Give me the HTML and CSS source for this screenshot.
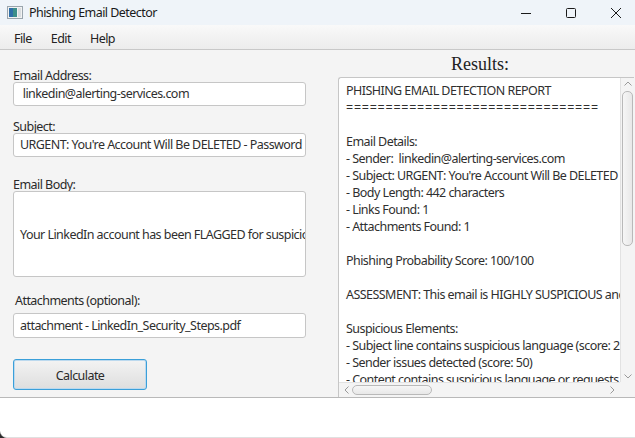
FILE: index.html
```html
<!DOCTYPE html>
<html>
<head>
<meta charset="utf-8">
<link rel="stylesheet" href="styles.css">
</head>
<body>
<div class="window">
  <div class="titlebar">
    <div class="app-icon"><svg width="16" height="13" viewBox="0 0 16 13"><rect x="0.5" y="0.5" width="15" height="12" fill="#f2f2f2" stroke="#9aa5ad"/><rect x="2" y="2" width="8" height="9" fill="#3c8f8a"/><rect x="2" y="2" width="4" height="9" fill="#2f6fa8"/><rect x="11" y="2" width="3" height="9" fill="#d9dde0"/></svg></div>
    <div class="title">Phishing Email Detector</div>
    <div class="controls">
      <span class="ctl"><svg width="12" height="12" viewBox="0 0 12 12"><line x1="1" y1="6.5" x2="11" y2="6.5" stroke="#1a1a1a" stroke-width="1"/></svg></span>
      <span class="ctl"><svg width="12" height="12" viewBox="0 0 12 12"><rect x="1.5" y="1.5" width="9" height="9" rx="1" fill="none" stroke="#1a1a1a" stroke-width="1"/></svg></span>
      <span class="ctl"><svg width="12" height="12" viewBox="0 0 12 12"><path d="M1 1 L11 11 M11 1 L1 11" stroke="#1a1a1a" stroke-width="1"/></svg></span>
    </div>
  </div>
  <div class="menubar">
    <span class="menu">File</span>
    <span class="menu">Edit</span>
    <span class="menu">Help</span>
  </div>
  <div class="content">
    <div class="form">
      <div class="label l-first">Email Address:</div>
      <div class="field"> linkedin@alerting-services.com</div>
      <div class="label l-gap">Subject:</div>
      <div class="field">URGENT: You're Account Will Be DELETED - Password Reset Required</div>
      <div class="label l-gap2">Email Body:</div>
      <div class="area">Your LinkedIn account has been FLAGGED for suspicious activity</div>
      <div class="label l-attach">Attachments (optional):</div>
      <div class="field f-pad">attachment - LinkedIn_Security_Steps.pdf</div>
      <div class="button">Calculate</div>
    </div>
    <div class="results-col">
      <div class="results-title">Results:</div>
      <div class="results">
        <div class="results-text">PHISHING EMAIL DETECTION REPORT
<span class="rule">================================</span>

Email Details:
- Sender:  linkedin@alerting-services.com
- Subject: URGENT: You're Account Will Be DELETED - Password Reset Required
- Body Length: 442 characters
- Links Found: 1
- Attachments Found: 1

Phishing Probability Score: 100/100

ASSESSMENT: This email is HIGHLY SUSPICIOUS and likely a phishing attempt.

Suspicious Elements:
- Subject line contains suspicious language (score: 25)
- Sender issues detected (score: 50)
- Content contains suspicious language or requests</div>
        <div class="vbar">
          <svg class="arrow" width="10" height="8" viewBox="0 0 10 8"><path d="M1.5 5.5 L5 2 L8.5 5.5" fill="none" stroke="#9a9a9a" stroke-width="1"/></svg>
          <div class="vtrack"><div class="vthumb"></div></div>
          <svg class="arrow" width="10" height="8" viewBox="0 0 10 8"><path d="M1.5 2.5 L5 6 L8.5 2.5" fill="none" stroke="#9a9a9a" stroke-width="1"/></svg>
        </div>
        <div class="hbar">
          <svg class="arrow" width="8" height="10" viewBox="0 0 8 10"><path d="M5.5 1.5 L2 5 L5.5 8.5" fill="none" stroke="#9a9a9a" stroke-width="1"/></svg>
          <div class="htrack"><div class="hthumb"></div></div>
          <svg class="arrow" width="8" height="10" viewBox="0 0 8 10"><path d="M2.5 1.5 L6 5 L2.5 8.5" fill="none" stroke="#9a9a9a" stroke-width="1"/></svg>
        </div>
        <div class="corner"></div>
      </div>
    </div>
  </div>
  <div class="footer"></div>
</div>
</body>
</html>
```
FILE: styles.css
```css
html, body {
  margin: 0;
  padding: 0;
  background: #2b2b2b;
}
.window {
  width: 635px;
  height: 438px;
  display: flex;
  flex-direction: column;
  font-family: "Segoe UI", "Noto Sans", sans-serif;
  letter-spacing: -0.55px;
  color: #2a2a2a;
  overflow: hidden;
}
.titlebar {
  height: 25px;
  background: #eff4f9;
  display: flex;
  align-items: center;
  flex-shrink: 0;
}
.app-icon {
  width: 16px;
  height: 13px;
  margin-left: 7px;
  margin-right: 6px;
  display: flex;
}
.title {
  font-size: 12.5px;
  color: #1a1a1a;
  flex: 1;
}
.controls {
  display: flex;
  height: 25px;
  align-items: center;
  margin-right: -3px;
}
.ctl {
  width: 45px;
  display: flex;
  justify-content: center;
  align-items: center;
}
.menubar {
  background: linear-gradient(#f9f9f9, #ececec);
  border-bottom: 1px solid #c8c8c8;
  display: flex;
  align-items: center;
  padding-left: 6px;
  padding-top: 2px;
  box-sizing: border-box;
  height: 25px;
  flex-shrink: 0;
}
.menu {
  font-size: 12.5px;
  color: #222;
  padding: 0 8px;
  margin-right: 3px;
}
.content {
  height: 347px;
  background: #f4f4f4;
  border-bottom: 1px solid #b9b9b9;
  display: flex;
  flex-shrink: 0;
}
.form {
  width: 293px;
  margin-left: 13px;
  display: flex;
  flex-direction: column;
  font-size: 12.5px;
}
.label {
  height: 15px;
  line-height: 17px;
  color: #2a2a2a;
}
.l-first { margin-top: 17px; }
.l-gap { margin-top: 12px; }
.l-gap2 { margin-top: 19px; }
.l-attach { margin-top: 15px; margin-left: 2px; }
.field, .area {
  background: #fff;
  border: 1px solid #c6c6c6;
  border-radius: 3px;
  box-sizing: border-box;
  white-space: pre;
  overflow: hidden;
  color: #2f2f2f;
}
.field {
  height: 24px;
  line-height: 22px;
  padding: 0 6px;
}
.f-pad { margin-top: 6px; height: 25px; line-height: 23px; }
.area {
  height: 86px;
  padding: 0 6px;
  display: flex;
  align-items: center;
}
.button {
  margin-top: 21px;
  width: 134px;
  height: 31px;
  box-sizing: border-box;
  border: 1px solid #3a9fd9;
  border-radius: 3px;
  background: linear-gradient(#f3f3f3, #dedede);
  box-shadow: inset 0 0 0 1px #bcd9ee;
  display: flex;
  align-items: center;
  justify-content: center;
  padding-top: 2px;
  color: #2a2a2a;
}
.results-col {
  margin-left: 32px;
  width: 296px;
  display: flex;
  flex-direction: column;
}
.results-title {
  font-family: "Liberation Serif", "DejaVu Serif", serif;
  letter-spacing: 0;
  font-size: 18px;
  height: 27px;
  line-height: 29px;
  text-align: center;
  padding-right: 12px;
  color: #222;
}
.results {
  flex: 1;
  background: #fff;
  border: 1px solid #c6c6c6;
  border-right: none;
  border-bottom: none;
  border-radius: 3px 0 0 0;
  display: grid;
  grid-template-columns: 1fr 14px;
  grid-template-rows: 1fr 15px;
  overflow: hidden;
}
.results-text {
  white-space: pre;
  overflow: hidden;
  font-size: 12.5px;
  line-height: 17px;
  padding: 4px 0 0 7px;
  color: #2f2f2f;
}
.rule {
  letter-spacing: 0.75px;
}
.vbar {
  background: #f4f4f4;
  border-left: 1px solid #e2e2e2;
  display: flex;
  flex-direction: column;
  align-items: center;
  padding: 2px 0;
}
.vtrack {
  flex: 1;
  width: 100%;
  padding: 3px 1px 0 1px;
  box-sizing: border-box;
}
.vthumb {
  height: 155px;
  border: 1px solid #b9b9b9;
  border-radius: 5px;
  background: linear-gradient(90deg, #f6f6f6, #e8e8e8);
  box-sizing: border-box;
  width: 11px;
  margin: 0 auto;
}
.hbar {
  background: #f4f4f4;
  border-top: 1px solid #e2e2e2;
  display: flex;
  align-items: center;
  padding: 0 4px;
}
.htrack {
  flex: 1;
  padding-left: 1px;
}
.hthumb {
  width: 80px;
  height: 10px;
  border: 1px solid #b9b9b9;
  border-radius: 5px;
  background: linear-gradient(#f6f6f6, #e8e8e8);
  box-sizing: border-box;
}
.corner {
  background: #f4f4f4;
}
.footer {
  flex: 1;
  background: #fff;
  border-bottom: 1px solid #e0e0e0;
  border-radius: 0 0 0 7px;
}
```
